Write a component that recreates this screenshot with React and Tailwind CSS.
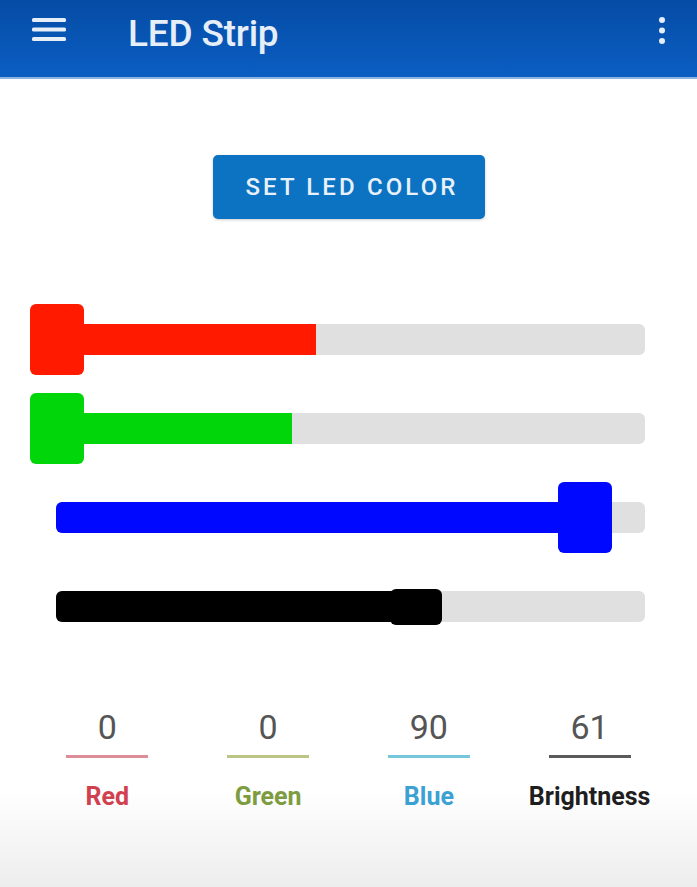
import React from 'react';

const sliders = [
  { id: 'red', color: 'bg-[#ff1a00]', trackClass: 'ml-[30px]', fillClass: 'w-[286px]', thumbClass: 'left-0 -top-[20px] w-[54px] h-[71px]' },
  { id: 'green', color: 'bg-[#00d60a]', trackClass: 'ml-[30px]', fillClass: 'w-[262px]', thumbClass: 'left-0 -top-[20px] w-[54px] h-[71px]' },
  { id: 'blue', color: 'bg-[#0008ff]', trackClass: 'ml-[56px]', fillClass: 'w-[530px]', thumbClass: 'left-[502px] -top-[20px] w-[54px] h-[71px]' },
  { id: 'brightness', color: 'bg-black', trackClass: 'ml-[56px]', fillClass: 'w-[360px]', thumbClass: 'left-[334px] -top-[2px] w-[52px] h-[36px]' },
];

const stats = [
  { label: 'Red', value: 0, line: 'bg-[#dd8c98]', text: 'text-[#d1404f]' },
  { label: 'Green', value: 0, line: 'bg-[#bcc585]', text: 'text-[#7d9c40]' },
  { label: 'Blue', value: 90, line: 'bg-[#76c7dc]', text: 'text-[#3ba1d3]' },
  { label: 'Brightness', value: 61, line: 'bg-[#5a5a5a]', text: 'text-[#1e1e1e]' },
];

const Slider = ({ s }) => (
  <div className={`relative h-[31px] mr-[52px] rounded-md bg-[#e0e0e0] ${s.trackClass}`}>
    <div className={`absolute left-0 top-0 h-full rounded-l-md ${s.color} ${s.fillClass}`} />
    <div className={`absolute rounded-md ${s.color} ${s.thumbClass}`} />
  </div>
);

export default function App() {
  return (
    <div className="w-[697px] h-[887px] flex flex-col overflow-hidden bg-white font-['Roboto',sans-serif]">
      <header className="h-[79px] shrink-0 flex items-start pl-[32px] pr-[31px] bg-linear-to-b from-[#054ca5] to-[#0b5ec3] shadow-[0_2px_3px_rgba(0,0,0,0.12)] border-b-2 border-[#8fb3e0]">
        <svg width="34" height="24" viewBox="0 0 34 24" className="mt-[18px]">
          <rect x="0" y="0" width="34" height="4" rx="1.5" fill="#e6eef8" />
          <rect x="0" y="9.5" width="34" height="4" rx="1.5" fill="#e6eef8" />
          <rect x="0" y="19" width="34" height="4" rx="1.5" fill="#e6eef8" />
        </svg>
        <h1 className="ml-[62px] mt-[15px] text-[37px] leading-none font-medium text-[#e6eef8] tracking-[-0.2px]">
          LED Strip
        </h1>
        <svg width="8" height="30" viewBox="0 0 8 30" className="ml-auto mt-[16px]">
          <circle cx="4" cy="4" r="3" fill="#e6eef8" />
          <circle cx="4" cy="14.5" r="3" fill="#e6eef8" />
          <circle cx="4" cy="25" r="3" fill="#e6eef8" />
        </svg>
      </header>

      <main className="flex-1 flex flex-col bg-linear-to-b from-white from-88% to-[#ededed]">
        <div className="flex justify-center mt-[76px]">
          <button className="w-[272px] h-[64px] pl-[7px] rounded-[5px] bg-[#0c73c2] text-[#e8f1fb] text-[24px] font-medium tracking-[0.13em] shadow-[0_1px_3px_rgba(0,0,0,0.2)]">
            SET LED COLOR
          </button>
        </div>

        <div className="mt-[105px] flex flex-col gap-[58px]">
          {sliders.map((s) => (
            <Slider key={s.id} s={s} />
          ))}
        </div>

        <div className="mt-[85px] grid grid-cols-4 px-[27px]">
          {stats.map((st) => (
            <div key={st.label} className="flex flex-col items-center">
              <span className="text-[34px] leading-[40px] text-[#555555]">{st.value}</span>
              <div className={`mt-[8px] h-[2.5px] w-[82px] ${st.line}`} />
              <span className={`mt-[24px] text-[25px] leading-[30px] font-bold ${st.text}`}>{st.label}</span>
            </div>
          ))}
        </div>
      </main>
    </div>
  );
}
